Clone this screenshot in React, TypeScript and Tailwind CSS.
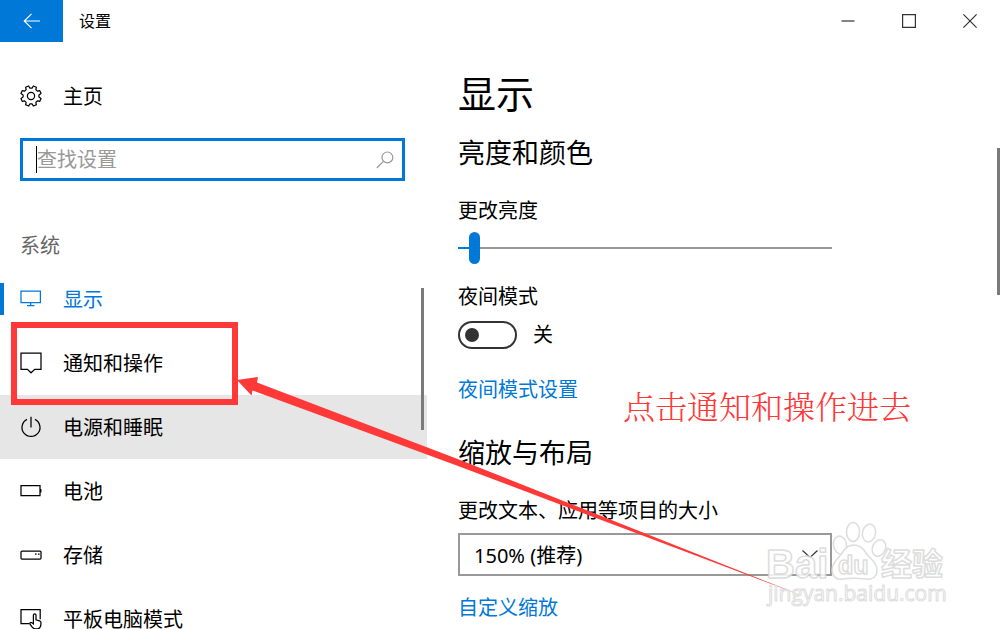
import { useState } from 'react';
import type { ReactNode } from 'react';

const gearPoints = Array.from({ length: 8 }, (_, i) => 22.5 + i * 45)
  .flatMap((a) => [[a - 15, 8], [a - 9, 10.3], [a + 9, 10.3], [a + 15, 8]])
  .map(([deg, r]) => {
    const rad = (deg * Math.PI) / 180;
    return `${(11 + r * Math.sin(rad)).toFixed(2)},${(11 - r * Math.cos(rad)).toFixed(2)}`;
  })
  .join(' ');

function Icon({ children }: { children: ReactNode }) {
  return (
    <svg
      viewBox="0 0 22 22"
      className="w-[22px] h-[22px] shrink-0"
      fill="none"
      stroke="currentColor"
      strokeWidth="1.25"
      aria-hidden="true"
    >
      {children}
    </svg>
  );
}

const navItems = [
  {
    name: '显示',
    icon: <path d="M1 3.2h19.4v11.3H1zM10.7 14.5v2.8M7 17.6h7.4" />,
  },
  {
    name: '通知和操作',
    icon: <path d="M1 1.2h20v16.2h-6.2L11 20.8l-3.6-3.4H1z" />,
  },
  {
    name: '电源和睡眠',
    icon: <path d="M11 0.8v10.6M7 3.4a9 9 0 1 0 8 0" />,
  },
  {
    name: '电池',
    icon: <path d="M1 5.7h19v10H1zM20.8 9v3.6" />,
  },
  {
    name: '存储',
    icon: (
      <>
        <rect x="1" y="7" width="20" height="8" rx="1" />
        <path d="M15 10h1.6M18 10h1.6" />
      </>
    ),
  },
  {
    name: '平板电脑模式',
    icon: (
      <>
        <path d="M9 15.6H1V1.6h19.2v9.6" />
        <path d="M13.4 15.8V7.2c0-1.8 2.6-1.8 2.6 0v4.6l3.6 1c1 .3 1.4.9 1.4 1.8 0 3.6-1 6.2-3.6 6.2h-2.6c-1.4 0-2-1-2.8-2l-2-2.6c-.8-1.4.8-2.2 1.8-1.4z" />
      </>
    ),
  },
];

function TitleBar() {
  return (
    <header className="flex items-start h-[42px] shrink-0">
      <button aria-label="返回" className="w-[63px] h-[42px] bg-[#0078d7] text-white flex items-center justify-center">
        <svg viewBox="0 0 18 16" className="w-[18px] h-4" fill="none" stroke="currentColor" strokeWidth="1.1">
          <path d="M17 8H1M8.5 0.8L1.2 8l7.3 7.2" />
        </svg>
      </button>
      <span className="flex-1 pl-4 text-base leading-[42px]">设置</span>
      <div className="flex text-[#333]">
        <button aria-label="最小化" className="w-[61px] h-[42px] flex items-center justify-center">
          <svg viewBox="0 0 14 14" className="w-3.5 h-3.5" fill="none" stroke="currentColor" strokeWidth="1.2">
            <path d="M0.5 7h13" />
          </svg>
        </button>
        <button aria-label="最大化" className="w-[61px] h-[42px] flex items-center justify-center">
          <svg viewBox="0 0 14 14" className="w-3.5 h-3.5" fill="none" stroke="currentColor" strokeWidth="1.2">
            <path d="M0.6 0.6h12.8v12.8H0.6z" />
          </svg>
        </button>
        <button aria-label="关闭" className="w-[61px] h-[42px] flex items-center justify-center">
          <svg viewBox="0 0 14 14" className="w-3.5 h-3.5" fill="none" stroke="currentColor" strokeWidth="1.2">
            <path d="M0.4 0.4l13.2 13.2M13.6 0.4L0.4 13.6" />
          </svg>
        </button>
      </div>
    </header>
  );
}

function Sidebar() {
  const [active, setActive] = useState('显示');

  return (
    <aside className="w-[427px] shrink-0 pt-[22px]">
      <button className="w-full h-16 pl-5 flex items-center gap-[21px] text-xl">
        <Icon>
          <polygon points={gearPoints} strokeLinejoin="round" />
          <circle cx="11" cy="11" r="3.6" />
        </Icon>
        <span className="pt-0.5">主页</span>
      </button>

      <label className="mt-2.5 ml-5 mr-[22px] h-[43px] border-3 border-[#0078d7] flex items-center pl-[13px] pr-2">
        <span className="w-px h-[27px] bg-black" />
        <input
          type="text"
          aria-label="查找设置"
          placeholder="查找设置"
          className="flex-1 min-w-0 text-xl leading-7 outline-none placeholder:text-[#999]"
        />
        <svg viewBox="0 0 18 18" className="w-[18px] h-[18px] text-[#999]" fill="none" stroke="currentColor" strokeWidth="1.2">
          <circle cx="11.4" cy="6.4" r="5.4" />
          <path d="M7.4 10.4L0.8 17" />
        </svg>
      </label>

      <h2 className="mt-[51px] mb-[7px] pl-5 text-xl leading-7 text-[#666]">系统</h2>

      <nav className="relative">
        <ul>
          {navItems.map((item) => (
            <li key={item.name} className="relative">
              <button
                onClick={() => setActive(item.name)}
                className={`w-full h-16 pl-5 flex items-center gap-[21px] text-xl ${
                  item.name === active ? 'text-[#0078d7]' : 'text-black'
                } ${item.name === '电源和睡眠' ? 'bg-[#e6e6e6]' : ''}`}
              >
                <Icon>{item.icon}</Icon>
                <span className="pt-0.5">{item.name}</span>
              </button>
              {item.name === active && <span className="absolute left-0 top-4 w-1 h-8 bg-[#0078d7]" />}
              {item.name === '通知和操作' && (
                <span className="absolute z-10 left-[11px] -top-[9px] w-[227px] h-[83px] border-6 border-[#ff3838] pointer-events-none" />
              )}
            </li>
          ))}
        </ul>
        <span className="absolute right-[3px] top-[21px] w-[3px] h-[142px] bg-[#7a7a7a]" />
      </nav>
    </aside>
  );
}

function DisplaySettings() {
  const [brightness, setBrightness] = useState(3);
  const [nightMode, setNightMode] = useState(false);

  return (
    <main className="relative flex-1 min-w-0 pt-7 pl-[31px] pr-6">
      <h1 className="text-[38px] leading-[46px]">显示</h1>

      <h2 className="mt-[19px] text-[27px] leading-9">亮度和颜色</h2>
      <div className="max-w-[374px]">
        <label htmlFor="brightness" className="block mt-[26px] text-xl leading-7">更改亮度</label>
        <input
          id="brightness"
          type="range"
          min="0"
          max="100"
          value={brightness}
          onChange={(e) => setBrightness(Number(e.target.value))}
          style={{
            background: `linear-gradient(to right, #0078d7 ${brightness}%, #999 ${brightness}%) center / 100% 2px no-repeat`,
          }}
          className="block mt-[7px] w-full h-8 appearance-none [&::-webkit-slider-thumb]:appearance-none [&::-webkit-slider-thumb]:w-[11px] [&::-webkit-slider-thumb]:h-8 [&::-webkit-slider-thumb]:rounded-full [&::-webkit-slider-thumb]:bg-[#0078d7]"
        />
      </div>

      <label htmlFor="night-mode" className="block mt-[19px] text-xl leading-7">夜间模式</label>
      <div className="mt-2.5 flex items-center gap-4">
        <input
          id="night-mode"
          type="checkbox"
          checked={nightMode}
          onChange={(e) => setNightMode(e.target.checked)}
          className="appearance-none w-[59px] h-7 rounded-full border-2 border-[#333] flex items-center px-[5px] before:w-3.5 before:h-3.5 before:rounded-full before:bg-[#333] checked:justify-end"
        />
        <span className="text-xl leading-7">{nightMode ? '开' : '关'}</span>
      </div>
      <a href="#night" className="block w-fit mt-[27px] text-xl leading-7 text-[#0078d7]">夜间模式设置</a>

      <h2 className="mt-[31px] text-[27px] leading-9">缩放与布局</h2>
      <label htmlFor="scale" className="block mt-[26px] text-xl leading-7">更改文本、应用等项目的大小</label>
      <div className="relative mt-2 max-w-[374px]">
        <select
          id="scale"
          defaultValue="150"
          className="w-full h-[43px] appearance-none border-2 border-[#999] bg-white pl-3.5 pt-0.5 text-xl outline-none"
        >
          <option value="100">100%</option>
          <option value="125">125%</option>
          <option value="150">150% (推荐)</option>
          <option value="175">175%</option>
        </select>
        <svg
          viewBox="0 0 16 8"
          className="absolute right-3.5 top-[17px] w-4 h-2 pointer-events-none"
          fill="none"
          stroke="#333"
          strokeWidth="1.2"
        >
          <path d="M0.5 0.5L8 7.4l7.5-6.9" />
        </svg>
      </div>
      <a href="#custom" className="block w-fit mt-[18px] text-xl leading-7 text-[#0078d7]">自定义缩放</a>

      <span className="absolute right-0 top-[106px] w-[3px] h-[147px] bg-[#7a7a7a]" />
    </main>
  );
}

// Red note, arrow and site mark laid over the window
function Annotations() {
  return (
    <div className="absolute inset-0 z-20 pointer-events-none">
      <p className="absolute left-[623px] top-[388px] text-[32px] leading-10 font-light text-[#ff3838] whitespace-nowrap font-['Liberation_Serif','Noto_Serif_CJK_SC','Noto_Sans_CJK_SC',serif]">
        点击通知和操作进去
      </p>
      <svg viewBox="0 0 572 222" className="absolute left-[236px] top-[376px] w-[572px] h-[222px]" fill="#ff3838">
        <path d="M1 4L22 1l-1 5.5L219 82 571 221.5 218 88.5 16.5 14.5 15.5 19.5z" />
      </svg>
      <svg
        viewBox="0 0 184 90"
        className="absolute left-[765px] top-[518px] w-[184px] h-[90px] opacity-85"
        fill="#fff"
        stroke="#d8d8d8"
        strokeWidth="1.5"
        strokeLinejoin="round"
      >
        <g fontFamily="Liberation Sans, Noto Sans CJK SC, sans-serif" fontWeight="700">
          <text x="1" y="60" fontSize="40">Bai</text>
          <text x="116" y="57" fontSize="31">经验</text>
        </g>
        <ellipse cx="75" cy="27" rx="6.5" ry="9" transform="rotate(-10 75 27)" />
        <ellipse cx="88" cy="14" rx="6.5" ry="9.5" />
        <ellipse cx="104" cy="15" rx="6.5" ry="9" transform="rotate(12 104 15)" />
        <ellipse cx="114" cy="30" rx="6.5" ry="8.5" transform="rotate(24 114 30)" />
        <path d="M89 27c6 0 9 3 12 8 4 6 11 9 11 17 0 7-5 10-11 9-8-1-16-1-24 0-6 1-10-3-10-9 0-8 6-11 10-17 3-5 6-8 12-8z" />
        <text x="73" y="56" fontSize="25" fontWeight="700" fontFamily="Liberation Sans, sans-serif">du</text>
        <text x="3" y="83" fontSize="21" strokeWidth="1" fontFamily="Open Sans, sans-serif">jingyan.baidu.com</text>
      </svg>
    </div>
  );
}

export default function App() {
  return (
    <div className="relative h-screen overflow-hidden flex flex-col bg-white text-black font-['Noto_Sans','Noto_Sans_CJK_SC',sans-serif]">
      <TitleBar />
      <div className="flex flex-1 min-h-0">
        <Sidebar />
        <DisplaySettings />
      </div>
      <Annotations />
    </div>
  );
}
